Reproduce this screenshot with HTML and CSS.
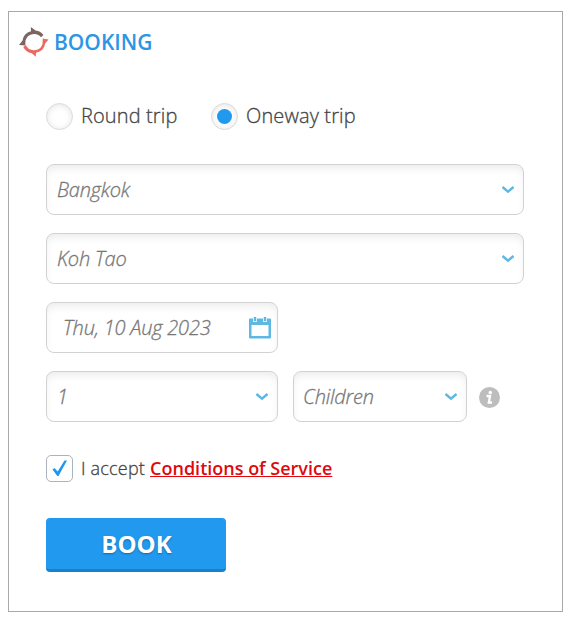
FILE: index.html
```html
<!DOCTYPE html>
<html lang="en">
<head>
    <meta charset="UTF-8">
    <meta name="viewport" content="width=device-width, initial-scale=1.0">
    <title>Booking</title>
    <link rel="stylesheet" href="styles.css">
</head>
<body>
    <div class="booking">
        <h2 class="title">
            <svg class="logo" width="30" height="30" viewBox="0 0 30 30">
                <path fill="#7b6662" d="M0 18L3.500 13.500A11.300 11.300 0 0 1 12 4.300L11.800 0L16.500 3.500A11.300 11.300 0 0 1 24.500 8L22 10.300A9 9 0 0 0 6.500 13.500L6.300 18.500Z"/>
                <path fill="#ea6a60" d="M29.500 12.500L26.200 16.500A11.300 11.300 0 0 1 17 25.700L16.800 29.800L12.800 26.300A11.300 11.300 0 0 1 4.300 20L6.800 18A9 9 0 0 0 23.500 17L23.800 11.500Z"/>
            </svg>
            <span>BOOKING</span>
        </h2>

        <form class="form">
            <div class="trip">
                <label class="radio"><span class="circle"></span><span class="label">Round trip</span></label>
                <label class="radio"><span class="circle checked"></span><span class="label">Oneway trip</span></label>
            </div>

            <div class="field">
                <span>Bangkok</span>
                <svg class="arrow" width="12" height="8" viewBox="0 0 12 8"><path d="M0.500 1L6 5.700L11.500 1"/></svg>
            </div>
            <div class="field">
                <span>Koh Tao</span>
                <svg class="arrow" width="12" height="8" viewBox="0 0 12 8"><path d="M0.500 1L6 5.700L11.500 1"/></svg>
            </div>
            <div class="field date">
                <span>Thu, 10 Aug 2023</span>
                <svg width="22" height="22" viewBox="0 0 22 22">
                    <path fill="#5fb8e2" fill-rule="evenodd" d="M1 1.500H21Q22 1.500 22 2.500V20.500Q22 21.500 21 21.500H1Q0 21.500 0 20.500V2.500Q0 1.500 1 1.500ZM2.500 8V19H19.500V8Z"/>
                    <path d="M6 0V5M16 0V5" stroke="#d5eefa" stroke-width="4"/>
                    <path d="M6 0V4M16 0V4" stroke="#5fb8e2" stroke-width="2"/>
                </svg>
            </div>
            <div class="people">
                <div class="field adults">
                    <span>1</span>
                    <svg class="arrow" width="12" height="8" viewBox="0 0 12 8"><path d="M0.500 1L6 5.700L11.500 1"/></svg>
                </div>
                <div class="field children">
                    <span>Children</span>
                    <svg class="arrow" width="12" height="8" viewBox="0 0 12 8"><path d="M0.500 1L6 5.700L11.500 1"/></svg>
                </div>
                <svg class="info" width="21" height="21" viewBox="0 0 21 21">
                    <circle cx="10.500" cy="10.500" r="10.500" fill="#bdbdbd"/>
                    <circle cx="11.300" cy="5.500" r="1.800" fill="#fff"/>
                    <path d="M7.500 9H11L9.800 15.500H13" fill="none" stroke="#fff" stroke-width="2.300"/>
                </svg>
            </div>

            <div class="accept">
                <span class="checkbox">
                    <svg width="15" height="17" viewBox="0 0 15 17"><path d="M0.500 9.500L2.500 8L5.700 11.500L12.500 0.500H15L6.500 16H5.300Z" fill="#2196ec"/></svg>
                </span>
                <span class="agree">I accept</span>
                <a class="terms" href="#">Conditions of Service</a>
            </div>

            <button class="book" type="button">BOOK</button>
        </form>
    </div>
</body>
</html>
```
FILE: styles.css
```css
* {
    box-sizing: border-box;
}

body {
    margin: 0;
    padding: 11px 6px 8px 8px;
    background-color: #fff;
    font-family: "Open Sans", sans-serif;
    color: #444;
}

.booking {
    height: 601px;
    border: 1px solid #a9a9a9;
}

.title {
    display: flex;
    align-items: center;
    gap: 5px;
    height: 30px;
    margin: 15px 0 0 10px;
    font-size: 21px;
    font-weight: 600;
    color: #2b96e3;
}

.form {
    width: 478px;
    margin: 46px 0 0 37px;
    font-size: 20px;
    font-weight: 300;
}

.trip {
    display: flex;
    height: 27px;
    margin-bottom: 34px;
}

.radio {
    display: flex;
    align-items: center;
    gap: 8px;
    width: 165px;
    white-space: nowrap;
}

.label {
    padding-bottom: 2px;
    letter-spacing: 0.12px;
    -webkit-text-stroke: 0.3px;
}

.circle {
    display: flex;
    align-items: center;
    justify-content: center;
    flex: none;
    width: 27px;
    height: 27px;
    border: 1px solid #d9d9d9;
    border-radius: 50%;
    box-shadow: inset 0 1px 6px #e4e4e4;
}

.circle.checked::after {
    content: "";
    width: 15px;
    height: 15px;
    border-radius: 50%;
    background-color: #2199ee;
}

.field {
    display: flex;
    align-items: center;
    justify-content: space-between;
    height: 51px;
    margin-bottom: 18px;
    padding: 0 9px 0 10px;
    border: 1px solid #d2d2d2;
    border-radius: 8px;
    box-shadow: inset 0 5px 9px -2px #ebebeb;
    font-style: italic;
    letter-spacing: -0.2px;
    -webkit-text-stroke: 0.3px;
    color: #777;
    white-space: nowrap;
}

.arrow {
    fill: none;
    stroke: #5cb8e4;
    stroke-width: 2.4;
}

.date {
    width: 232px;
    padding: 0 6px 0 16px;
}

.people {
    display: flex;
    align-items: center;
    height: 51px;
    margin-bottom: 33px;
}

.people .field {
    margin-bottom: 0;
}

.adults {
    width: 232px;
    margin-right: 15px;
}

.children {
    width: 174px;
    margin-right: 12px;
    padding-left: 9px;
}

.info {
    margin-top: 2px;
}

.accept {
    display: flex;
    align-items: center;
    height: 27px;
    margin-bottom: 36px;
    font-size: 18px;
}

.agree, .terms {
    padding-bottom: 2px;
}

.agree {
    letter-spacing: 0.2px;
    -webkit-text-stroke: 0.3px;
}

.checkbox {
    display: flex;
    align-items: center;
    justify-content: center;
    width: 27px;
    height: 27px;
    margin-right: 8px;
    border: 1px solid #a9b4be;
    border-radius: 5px;
}

.terms {
    margin-left: 5px;
    font-weight: 600;
    color: #e0080c;
    text-decoration: underline;
}

.book {
    display: block;
    width: 180px;
    height: 54px;
    padding: 0 0 0 1px;
    border: none;
    border-bottom: 3px solid #1683c4;
    border-radius: 4px;
    background-color: #2199ee;
    font-family: inherit;
    font-size: 24px;
    font-weight: 700;
    color: #fff;
    text-shadow: 0 1px 2px rgba(0, 0, 0, 0.3);
}
```
